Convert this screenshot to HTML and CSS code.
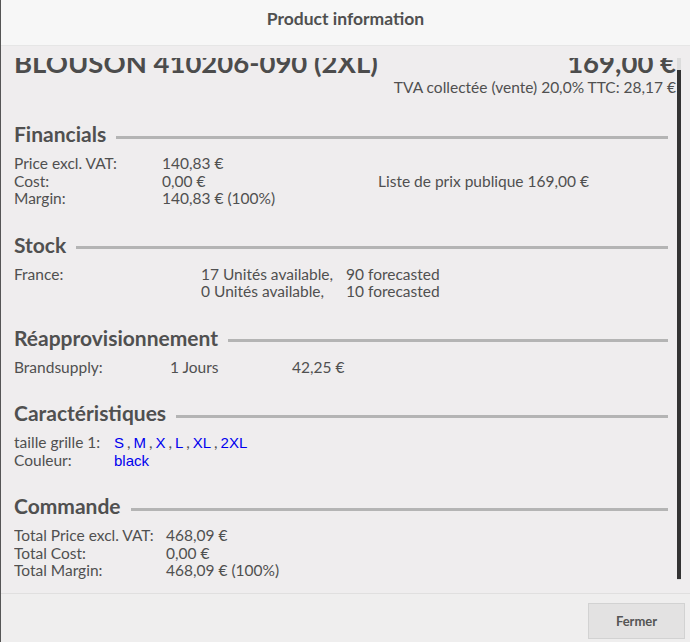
FILE: index.html
```html
<!DOCTYPE html>
<html>
<head>
    <title>Product information</title>
    <link rel="stylesheet" href="styles.css">
</head>
<body>
    <div class="modal">
        <div class="modal-header">Product information</div>
        <div class="modal-body">
            <div class="scroll-area">
                <div class="scroll-content">
                    <div class="product-head">
                        <div class="product-name">BLOUSON 410206-090 (2XL)</div>
                        <div class="product-price">169,00 €</div>
                    </div>
                    <div class="product-tax">TVA collectée (vente) 20,0% TTC: 28,17 €</div>

                    <div class="section first">
                        <div class="section-title"><span>Financials</span><div class="rule"></div></div>
                        <div class="grid fin">
                            <div>Price excl. VAT:</div><div>140,83 €</div>
                            <div class="pricelist">Liste de prix publique 169,00 €</div>
                            <div>Cost:</div><div>0,00 €</div>
                            <div>Margin:</div><div>140,83 € (100%)</div>
                        </div>
                    </div>

                    <div class="section">
                        <div class="section-title"><span>Stock</span><div class="rule"></div></div>
                        <div class="grid stock">
                            <div>France:</div><div>17 Unités available,</div><div>90 forecasted</div>
                            <div></div><div>0 Unités available,</div><div>10 forecasted</div>
                        </div>
                    </div>

                    <div class="section">
                        <div class="section-title"><span>Réapprovisionnement</span><div class="rule"></div></div>
                        <div class="grid supply">
                            <div>Brandsupply:</div><div>1 Jours</div><div>42,25 €</div>
                        </div>
                    </div>

                    <div class="section">
                        <div class="section-title"><span>Caractéristiques</span><div class="rule"></div></div>
                        <div class="grid attrs">
                            <div>taille grille 1:</div>
                            <div class="values"><a href="#">S</a> , <a href="#">M</a> , <a href="#">X</a> , <a href="#">L</a> , <a href="#">XL</a> , <a href="#">2XL</a></div>
                            <div>Couleur:</div>
                            <div><a href="#">black</a></div>
                        </div>
                    </div>

                    <div class="section">
                        <div class="section-title"><span>Commande</span><div class="rule"></div></div>
                        <div class="grid order">
                            <div>Total Price excl. VAT:</div><div>468,09 €</div>
                            <div>Total Cost:</div><div>0,00 €</div>
                            <div>Total Margin:</div><div>468,09 € (100%)</div>
                        </div>
                    </div>
                </div>
                <div class="scrollbar"><div class="thumb"></div></div>
            </div>
        </div>
        <div class="modal-footer">
            <button>Fermer</button>
        </div>
    </div>
</body>
</html>
```

FILE: styles.css
```css
html, body {
    margin: 0;
    height: 100%;
}
body {
    font-family: Lato, "Open Sans", sans-serif;
    background: #555;
    color: #505050;
}
.modal {
    height: 100%;
    margin-left: 1px;
    display: flex;
    flex-direction: column;
    background: #efedee;
}
.modal-header {
    height: 45px;
    line-height: 37px;
    background: #f7f7f7;
    border-bottom: 1px solid #e6e6e6;
    text-align: center;
    font-size: 17.5px;
    font-weight: bold;
    color: #505050;
}
.modal-body {
    padding: 12px 9px 13px 13px;
    border-bottom: 1px solid #e0dfdf;
}
.scroll-area {
    position: relative;
    height: 522px;
    overflow: hidden;
}
.scroll-content {
    padding-right: 5px;
    font-size: 15.5px;
    line-height: 17.5px;
}
.scrollbar {
    position: absolute;
    top: 0;
    right: 0;
    bottom: 0;
    width: 4px;
    background: #dcdcdc;
}
.thumb {
    margin-top: 12px;
    height: 509px;
    background: #333;
}
.product-head {
    margin-top: -10px;
    display: flex;
    justify-content: space-between;
    font-size: 27.5px;
    line-height: 30px;
    font-weight: bold;
    color: #4c4c4c;
}
.product-tax {
    text-align: right;
    line-height: 18px;
}
.section {
    margin-top: 25px;
}
.section.first {
    margin-top: 26px;
}
.section-title {
    display: flex;
    align-items: center;
    gap: 10px;
    font-size: 21px;
    line-height: 24px;
    font-weight: bold;
    margin-bottom: 9px;
}
.rule {
    flex: 1;
    height: 3px;
    margin: 6px 8px 0 0;
    background: #b4b4b4;
}
.grid {
    display: grid;
}
.fin {
    grid-template-columns: 148px 216px auto;
}
.pricelist {
    grid-column: 3;
    grid-row: 1 / 4;
    align-self: center;
}
.stock {
    grid-template-columns: 187px 145px auto;
}
.supply {
    grid-template-columns: 156px 122px auto;
}
.attrs {
    grid-template-columns: 100px auto;
}
.attrs a {
    font-family: "Liberation Sans", Arial, sans-serif;
    font-size: 15px;
    color: #0000ee;
    text-decoration: none;
}
.values {
    word-spacing: -1px;
}
.order {
    grid-template-columns: 152px auto;
}
.modal-footer {
    flex: 1;
    display: flex;
    justify-content: flex-end;
    align-items: flex-start;
    padding: 9px 5px 0 0;
    background: #efeeee;
}
button {
    width: 97px;
    height: 36px;
    background: #e3e2e2;
    border: 1px solid #d2d2d2;
    font-family: Lato, sans-serif;
    font-size: 13px;
    font-weight: bold;
    color: #555;
}
```
